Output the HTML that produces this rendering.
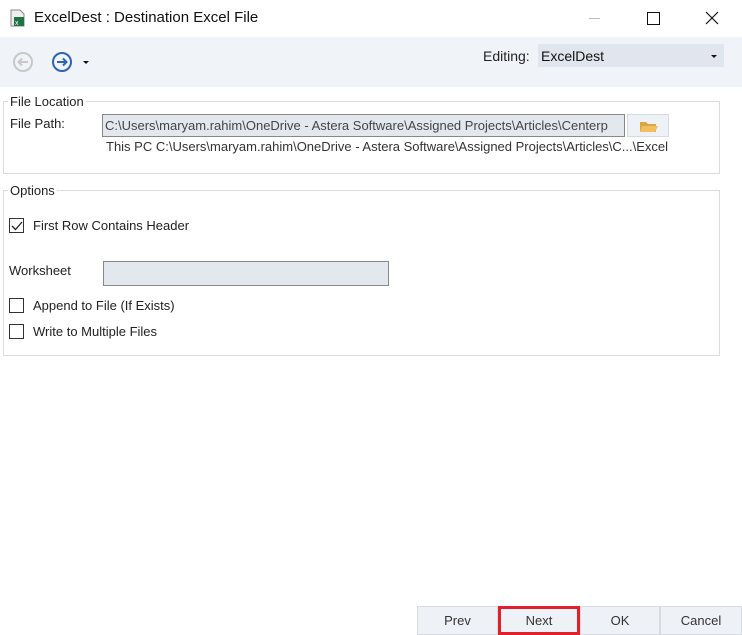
<!DOCTYPE html>
<html><head><style>
body{margin:0;width:742px;height:635px;background:#fff;font-family:"Liberation Sans",sans-serif;font-size:12px;color:#222;position:relative;overflow:hidden}
.a{position:absolute}
.cb{position:absolute;width:13px;height:13px;border:1px solid #333;background:#fff}
.btn{position:absolute;top:606px;height:29px;background:#eef1f6;border:1px solid #d6dbe3;box-sizing:border-box;text-align:center;line-height:27px;font-size:13px;color:#333}
</style></head><body>
<div class="a" style="left:0;top:0;width:742px;height:37px;background:#fff"></div>
<svg class="a" style="left:9px;top:9px" width="18" height="18"><path d="M2 1h9l4 4v12H2z" fill="#eee" stroke="#888"/><rect x="5" y="8" width="10" height="9" fill="#217346"/><text x="6" y="16" font-size="7" fill="#fff" font-family="Liberation Sans">x</text></svg>
<div class="a" style="left:34px;top:9px;font-size:15px;color:#111">ExcelDest : Destination Excel File</div>
<div class="a" style="left:589px;top:18px;width:11px;height:1px;background:#bbb"></div>
<div class="a" style="left:647px;top:12px;width:11px;height:11px;border:1px solid #111"></div>
<svg class="a" style="left:705px;top:11px" width="14" height="14"><path d="M1 1L13 13M13 1L1 13" stroke="#111" stroke-width="1.2"/></svg>
<div class="a" style="left:0;top:37px;width:742px;height:50px;background:#f0f3f8"></div>
<svg class="a" style="left:12px;top:51px" width="22" height="22"><circle cx="11" cy="11" r="9" fill="none" stroke="#c8c8c8" stroke-width="2"/><path d="M16 11H7M10 7.5L6.5 11L10 14.5" fill="none" stroke="#c8c8c8" stroke-width="2"/></svg>
<svg class="a" style="left:51px;top:51px" width="22" height="22"><circle cx="11" cy="11" r="9" fill="none" stroke="#2e64b0" stroke-width="2"/><path d="M6 11H15M12 7.5L15.5 11L12 14.5" fill="none" stroke="#2e64b0" stroke-width="2"/></svg>
<div class="a" style="left:83px;top:61px;border:3px solid transparent;border-top:3px solid #111"></div>
<div class="a" style="left:483px;top:48px;font-size:14px;color:#222">Editing:</div>
<div class="a" style="left:538px;top:44px;width:186px;height:23px;background:#e1e6ee"></div>
<div class="a" style="left:541px;top:48px;font-size:14px;color:#111">ExcelDest</div>
<div class="a" style="left:711px;top:55px;border:3px solid transparent;border-top:3px solid #111"></div>
<div class="a" style="left:3px;top:101px;width:715px;height:71px;border:1px solid #dcdcdc"></div>
<div class="a" style="left:8px;top:94px;background:#fff;padding:0 2px;font-size:13px;color:#222">File Location</div>
<div class="a" style="left:10px;top:116px;font-size:13px">File Path:</div>
<div class="a" style="left:102px;top:114px;width:521px;height:21px;border:1px solid #888;background:#e3e8ef;overflow:hidden;white-space:nowrap;line-height:21px;font-size:13px;color:#444;text-indent:2px">C:\Users\maryam.rahim\OneDrive - Astera Software\Assigned Projects\Articles\Centerp</div>
<div class="a" style="left:627px;top:114px;width:42px;height:23px;background:#eef1f6;border:1px solid #d6dbe3;box-sizing:border-box"></div>
<svg class="a" style="left:639px;top:118px" width="20" height="16"><path d="M1 4h6l2 2h8v8H1z" fill="#d9a742"/><path d="M3 8h16l-3 6H1z" fill="#f0c060"/></svg>
<div class="a" style="left:106px;top:139px;width:565px;overflow:hidden;white-space:nowrap;font-size:13px;color:#333">This PC C:\Users\maryam.rahim\OneDrive - Astera Software\Assigned Projects\Articles\C...\Excel</div>
<div class="a" style="left:3px;top:190px;width:715px;height:164px;border:1px solid #dcdcdc"></div>
<div class="a" style="left:8px;top:183px;background:#fff;padding:0 2px;font-size:13px;color:#222">Options</div>
<div class="cb" style="left:9px;top:218px"></div>
<svg class="a" style="left:10px;top:219px" width="14" height="14"><path d="M2 7L5.5 10.5L12 3" fill="none" stroke="#222" stroke-width="1.3"/></svg>
<div class="a" style="left:33px;top:218px;font-size:13px">First Row Contains Header</div>
<div class="a" style="left:9px;top:263px;font-size:13px">Worksheet</div>
<div class="a" style="left:103px;top:261px;width:284px;height:23px;border:1px solid #888;background:#e3e8ef"></div>
<div class="cb" style="left:9px;top:298px"></div>
<div class="a" style="left:33px;top:298px;font-size:13px">Append to File (If Exists)</div>
<div class="cb" style="left:9px;top:324px"></div>
<div class="a" style="left:33px;top:324px;font-size:13px">Write to Multiple Files</div>
<div class="btn" style="left:417px;width:81px">Prev</div>
<div class="btn" style="left:498px;width:82px;border:3px solid #e0202a;line-height:23px">Next</div>
<div class="btn" style="left:580px;width:80px">OK</div>
<div class="btn" style="left:660px;width:82px">Cancel</div>
</body></html>
